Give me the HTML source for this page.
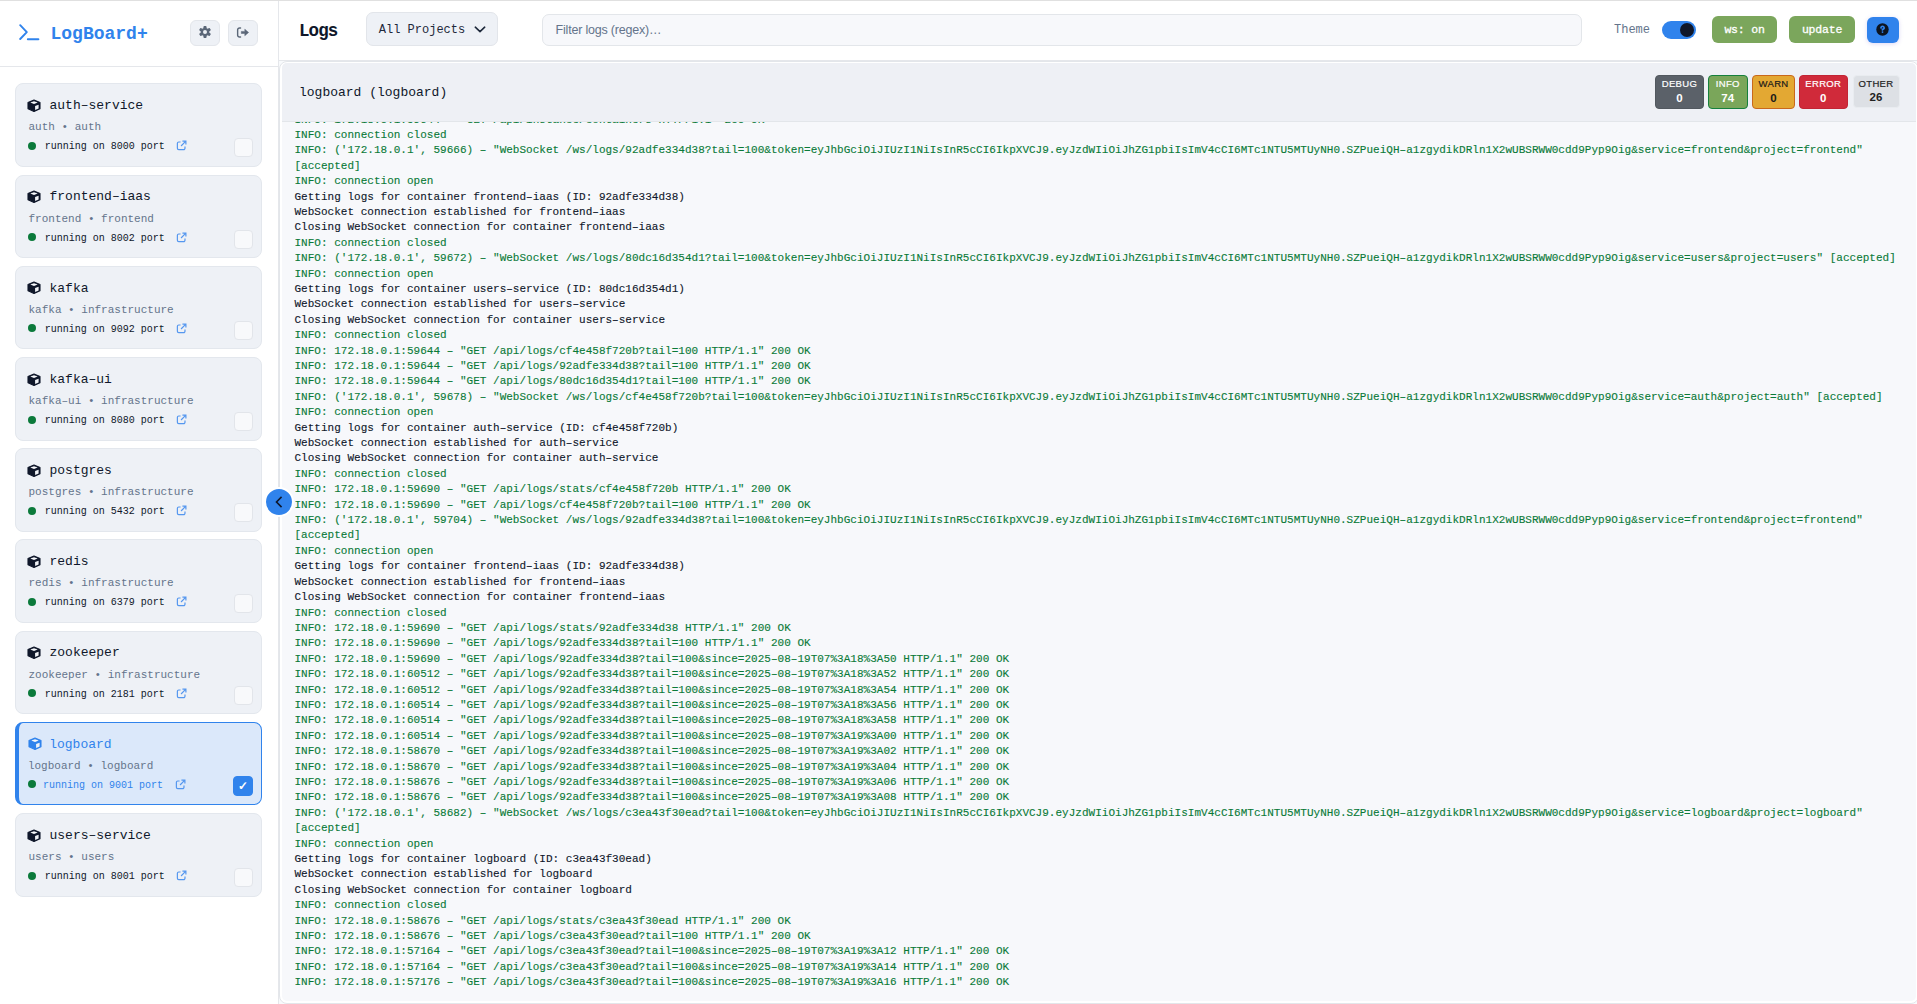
<!DOCTYPE html>
<html><head><meta charset="utf-8">
<style>
*{box-sizing:border-box;margin:0;padding:0}
html,body{width:1917px;height:1004px;overflow:hidden;background:#fff}
body{position:relative;font-family:"Liberation Mono",monospace;color:#0f172a}
.abs{position:absolute}
.topline{position:absolute;left:0;top:0;width:1917px;height:1px;background:#e0e0e0;z-index:50}
.sidebar{position:absolute;left:0;top:0;width:279px;height:1004px;border-right:1px solid #e5e7eb;background:#fff}
.sb-head{position:absolute;left:0;top:0;width:278px;height:67px;border-bottom:1px solid #e5e7eb}
.logo{position:absolute;left:19px;top:24px;width:21px;height:17px}
.brand{position:absolute;left:50.5px;top:25px;font-size:18px;line-height:18px;font-weight:bold;color:#3083ec;white-space:nowrap}
.ibtn{position:absolute;top:20px;width:29.5px;height:26px;border:1px solid #e3e6eb;background:#eef1f6;border-radius:6px}
.ibtn svg{position:absolute;left:50%;top:50%;transform:translate(-50%,-50%)}
.card{position:absolute;left:15px;width:246.5px;height:83.5px;background:#eef1f6;border:1px solid #e3e7ed;border-radius:8px}
.card.sel{background:#dbe8fa;border:1px solid #3083ec;border-left:4px solid #3083ec}
.card .cube{position:absolute;left:10.3px;top:14.7px;width:16px;height:16px;color:#0f172a}
.card.sel .cube{color:#3083ec;left:7.5px}
.card .name{position:absolute;left:33.5px;top:14.8px;font-size:13px;line-height:13px;white-space:nowrap}
.card.sel .name{color:#3083ec;left:30.2px}
.card .sub{position:absolute;left:12.5px;top:38px;font-size:11px;line-height:11px;color:#64748b;white-space:nowrap}
.card.sel .sub{left:8.9px}
.card .dot{position:absolute;left:12px;top:57.5px;width:8px;height:8px;border-radius:50%;background:#0b7a3b}
.card.sel .dot{left:9px}
.card .status{position:absolute;left:28.7px;top:58px;font-size:10px;line-height:10px;white-space:nowrap;color:#0f172a}
.card.sel .status{color:#3083ec;left:24px}
.card .ext{position:absolute;left:159.5px;top:56px;width:11px;height:11px;color:#5597ef}
.card.sel .ext{left:155.5px}
.card .cb{position:absolute;left:218px;top:54px;width:19px;height:19px;border:1px solid #e2e5ea;background:#f8f9fb;border-radius:4px;color:#fff;font-size:12px;line-height:18px;text-align:center;font-family:"Liberation Sans",sans-serif;font-weight:bold}
.card.sel .cb{left:214px;top:53px;width:20px;height:20px;background:#3083ec;border-color:#3083ec}

.mhead{position:absolute;left:279px;top:0;width:1638px;height:61px;border-bottom:1px solid #e5e7eb;background:#fff}
.title{position:absolute;left:299px;top:22.5px;font-size:17.5px;line-height:17.5px;letter-spacing:-0.9px;font-weight:bold;color:#0f172a}
.dd{position:absolute;left:366.3px;top:12.2px;width:131.4px;height:34.2px;border:1px solid #e2e5ea;background:#eef1f6;border-radius:7px}
.dd span{position:absolute;left:11.5px;top:11px;font-size:12px;line-height:12px;color:#1e293b;white-space:nowrap}
.dd svg{position:absolute;left:106.3px;top:12.4px}
.filter{position:absolute;left:542.4px;top:14.3px;width:1039.5px;height:31.4px;border:1px solid #e3e6ea;background:#f7f8fb;border-radius:7px}
.filter span{position:absolute;left:12.2px;top:8.8px;font-family:"Liberation Sans",sans-serif;font-size:12.5px;line-height:13px;letter-spacing:-0.2px;color:#64748b;white-space:nowrap}
.theme{position:absolute;left:1614px;top:24px;font-size:12px;line-height:12px;color:#64748b}
.toggle{position:absolute;left:1662px;top:20.5px;width:34px;height:18.6px;border-radius:10px;background:#3083ec}
.knob{position:absolute;left:1680px;top:22.9px;width:14.2px;height:14.2px;border-radius:50%;background:#0f172a}
.gbtn{position:absolute;top:16px;height:27px;border-radius:6px;background:#7ba65c;color:#fff;font-size:11.5px;line-height:28.2px;-webkit-text-stroke:0.3px #fff;letter-spacing:-0.2px;text-align:center;white-space:nowrap}
.qbtn{position:absolute;left:1867px;top:17.3px;width:32px;height:25.5px;border-radius:6px;background:#3083ec;box-shadow:0 1px 4px rgba(120,100,220,.25)}
.qbtn svg{position:absolute;left:8.8px;top:5.3px}

.mainbg{position:absolute;left:279px;top:61px;width:1638px;height:943px;background:#f8fafc}
.panel{position:absolute;left:279px;top:61px;width:1640px;height:943px;border:1px solid #e3e6ea;border-radius:8px;background:#fff}
.inner{position:absolute;left:2px;top:1px;right:2px;bottom:2px;border-radius:5px;background:#f7f8fb;overflow:hidden}
.ph{position:absolute;left:0;top:0;width:100%;height:59px;background:#eef0f5;border-bottom:1px solid #e3e6ea;z-index:5}
.ph .pt{position:absolute;left:17px;top:23px;font-size:13px;line-height:13px;color:#0f172a;white-space:nowrap}
.badge{position:absolute;top:11.8px;height:34px;border-radius:4px;border:1px solid;font-family:"Liberation Sans",sans-serif;text-align:center}
.badge .bl{position:absolute;left:0;right:0;top:3.6px;font-size:9.5px;line-height:10px;letter-spacing:0.35px;-webkit-text-stroke:0.2px currentColor}
.badge .bn{position:absolute;left:0;right:0;top:17px;font-size:11.5px;line-height:11.5px;font-weight:bold}
.logs{position:absolute;left:12.5px;top:49.5px;width:1612px;font-size:11px;line-height:15.4px;letter-spacing:0.016px}
.l{white-space:pre-wrap;overflow-wrap:normal}
.l.g{color:#0a7a38}
.l{-webkit-text-stroke:0.12px currentColor}
.l.d{color:#0f172a}
.collapse{position:absolute;left:264px;top:486.8px;width:30px;height:30px;border-radius:50%;background:#3083ec;border:2px solid #fff;z-index:60}
.collapse svg{position:absolute;left:6.5px;top:7px}
</style></head><body>
<div class="topline"></div>
<div class="sidebar">
  <div class="sb-head">
    <svg class="logo" viewBox="0 0 21 17"><path d="M1.2 1.2 7.8 8.1 1.2 15" fill="none" stroke="#3083ec" stroke-width="1.9" stroke-linecap="round" stroke-linejoin="round"/><path d="M8.8 15.3H19.4" stroke="#3083ec" stroke-width="1.9" stroke-linecap="round"/></svg>
    <div class="brand">LogBoard+</div>
    <div class="ibtn" style="left:190.2px"><svg style="margin-top:-0.6px" width="13" height="13" viewBox="0 0 13 13"><path fill="#5b6778" fill-rule="evenodd" d="M4.63 3.08 L5.27 0.42 L7.73 0.42 L8.37 3.08 L8.53 3.17 L11.15 2.40 L12.38 4.53 L10.40 6.41 L10.40 6.59 L12.38 8.47 L11.15 10.60 L8.53 9.83 L8.37 9.92 L7.73 12.58 L5.27 12.58 L4.63 9.92 L4.47 9.83 L1.85 10.60 L0.62 8.47 L2.60 6.59 L2.60 6.41 L0.62 4.53 L1.85 2.40 L4.47 3.17Z M6.5 4.5A2 2 0 1 0 6.5 8.5 2 2 0 1 0 6.5 4.5Z"/></svg></div>
    <div class="ibtn" style="left:228.2px"><svg width="13" height="12" viewBox="0 0 13 12"><path d="M4 0.9H3.1A2 2 0 0 0 1.1 2.9V8A2 2 0 0 0 3.1 10H4" fill="none" stroke="#5b6778" stroke-width="1.5" stroke-linecap="round"/><path d="M4.8 4.4H8.3V2.2L12.1 5.45 8.3 8.7V6.5H4.8Z" fill="#5b6778" stroke="#5b6778" stroke-width=".5" stroke-linejoin="round"/></svg></div>
  </div>
<div class="card" style="top:83.40px">
  <svg class="cube" viewBox="0 0 16 16"><path d="M8 1 14 3.4V9.8L8 12.5 2 9.8V3.4Z" fill="currentColor" stroke="currentColor" stroke-width="1.1" stroke-linejoin="round"/><path d="M4.3 3.6 8 2.2 11.7 3.6 8 5.1Z" fill="#f6f8fb"/><path d="M9.1 7.1 12.6 5.8V9.6L9.1 11.1Z" fill="#f1f3f7"/></svg><div class="name">auth–service</div>
  <div class="sub">auth • auth</div>
  <span class="dot"></span><div class="status">running on 8000 port</div><svg class="ext" viewBox="0 0 12 12"><path d="M5 2.2H3A1.5 1.5 0 0 0 1.5 3.7V9A1.5 1.5 0 0 0 3 10.5H8.3A1.5 1.5 0 0 0 9.8 9V7" fill="none" stroke="currentColor" stroke-width="1.3"/><path d="M5.5 6.5 10.2 1.8M7 1.2H10.8V5" fill="none" stroke="currentColor" stroke-width="1.3"/></svg>
  <div class="cb"></div>
</div>
<div class="card" style="top:174.60px">
  <svg class="cube" viewBox="0 0 16 16"><path d="M8 1 14 3.4V9.8L8 12.5 2 9.8V3.4Z" fill="currentColor" stroke="currentColor" stroke-width="1.1" stroke-linejoin="round"/><path d="M4.3 3.6 8 2.2 11.7 3.6 8 5.1Z" fill="#f6f8fb"/><path d="M9.1 7.1 12.6 5.8V9.6L9.1 11.1Z" fill="#f1f3f7"/></svg><div class="name">frontend–iaas</div>
  <div class="sub">frontend • frontend</div>
  <span class="dot"></span><div class="status">running on 8002 port</div><svg class="ext" viewBox="0 0 12 12"><path d="M5 2.2H3A1.5 1.5 0 0 0 1.5 3.7V9A1.5 1.5 0 0 0 3 10.5H8.3A1.5 1.5 0 0 0 9.8 9V7" fill="none" stroke="currentColor" stroke-width="1.3"/><path d="M5.5 6.5 10.2 1.8M7 1.2H10.8V5" fill="none" stroke="currentColor" stroke-width="1.3"/></svg>
  <div class="cb"></div>
</div>
<div class="card" style="top:265.80px">
  <svg class="cube" viewBox="0 0 16 16"><path d="M8 1 14 3.4V9.8L8 12.5 2 9.8V3.4Z" fill="currentColor" stroke="currentColor" stroke-width="1.1" stroke-linejoin="round"/><path d="M4.3 3.6 8 2.2 11.7 3.6 8 5.1Z" fill="#f6f8fb"/><path d="M9.1 7.1 12.6 5.8V9.6L9.1 11.1Z" fill="#f1f3f7"/></svg><div class="name">kafka</div>
  <div class="sub">kafka • infrastructure</div>
  <span class="dot"></span><div class="status">running on 9092 port</div><svg class="ext" viewBox="0 0 12 12"><path d="M5 2.2H3A1.5 1.5 0 0 0 1.5 3.7V9A1.5 1.5 0 0 0 3 10.5H8.3A1.5 1.5 0 0 0 9.8 9V7" fill="none" stroke="currentColor" stroke-width="1.3"/><path d="M5.5 6.5 10.2 1.8M7 1.2H10.8V5" fill="none" stroke="currentColor" stroke-width="1.3"/></svg>
  <div class="cb"></div>
</div>
<div class="card" style="top:357.00px">
  <svg class="cube" viewBox="0 0 16 16"><path d="M8 1 14 3.4V9.8L8 12.5 2 9.8V3.4Z" fill="currentColor" stroke="currentColor" stroke-width="1.1" stroke-linejoin="round"/><path d="M4.3 3.6 8 2.2 11.7 3.6 8 5.1Z" fill="#f6f8fb"/><path d="M9.1 7.1 12.6 5.8V9.6L9.1 11.1Z" fill="#f1f3f7"/></svg><div class="name">kafka–ui</div>
  <div class="sub">kafka–ui • infrastructure</div>
  <span class="dot"></span><div class="status">running on 8080 port</div><svg class="ext" viewBox="0 0 12 12"><path d="M5 2.2H3A1.5 1.5 0 0 0 1.5 3.7V9A1.5 1.5 0 0 0 3 10.5H8.3A1.5 1.5 0 0 0 9.8 9V7" fill="none" stroke="currentColor" stroke-width="1.3"/><path d="M5.5 6.5 10.2 1.8M7 1.2H10.8V5" fill="none" stroke="currentColor" stroke-width="1.3"/></svg>
  <div class="cb"></div>
</div>
<div class="card" style="top:448.20px">
  <svg class="cube" viewBox="0 0 16 16"><path d="M8 1 14 3.4V9.8L8 12.5 2 9.8V3.4Z" fill="currentColor" stroke="currentColor" stroke-width="1.1" stroke-linejoin="round"/><path d="M4.3 3.6 8 2.2 11.7 3.6 8 5.1Z" fill="#f6f8fb"/><path d="M9.1 7.1 12.6 5.8V9.6L9.1 11.1Z" fill="#f1f3f7"/></svg><div class="name">postgres</div>
  <div class="sub">postgres • infrastructure</div>
  <span class="dot"></span><div class="status">running on 5432 port</div><svg class="ext" viewBox="0 0 12 12"><path d="M5 2.2H3A1.5 1.5 0 0 0 1.5 3.7V9A1.5 1.5 0 0 0 3 10.5H8.3A1.5 1.5 0 0 0 9.8 9V7" fill="none" stroke="currentColor" stroke-width="1.3"/><path d="M5.5 6.5 10.2 1.8M7 1.2H10.8V5" fill="none" stroke="currentColor" stroke-width="1.3"/></svg>
  <div class="cb"></div>
</div>
<div class="card" style="top:539.40px">
  <svg class="cube" viewBox="0 0 16 16"><path d="M8 1 14 3.4V9.8L8 12.5 2 9.8V3.4Z" fill="currentColor" stroke="currentColor" stroke-width="1.1" stroke-linejoin="round"/><path d="M4.3 3.6 8 2.2 11.7 3.6 8 5.1Z" fill="#f6f8fb"/><path d="M9.1 7.1 12.6 5.8V9.6L9.1 11.1Z" fill="#f1f3f7"/></svg><div class="name">redis</div>
  <div class="sub">redis • infrastructure</div>
  <span class="dot"></span><div class="status">running on 6379 port</div><svg class="ext" viewBox="0 0 12 12"><path d="M5 2.2H3A1.5 1.5 0 0 0 1.5 3.7V9A1.5 1.5 0 0 0 3 10.5H8.3A1.5 1.5 0 0 0 9.8 9V7" fill="none" stroke="currentColor" stroke-width="1.3"/><path d="M5.5 6.5 10.2 1.8M7 1.2H10.8V5" fill="none" stroke="currentColor" stroke-width="1.3"/></svg>
  <div class="cb"></div>
</div>
<div class="card" style="top:630.60px">
  <svg class="cube" viewBox="0 0 16 16"><path d="M8 1 14 3.4V9.8L8 12.5 2 9.8V3.4Z" fill="currentColor" stroke="currentColor" stroke-width="1.1" stroke-linejoin="round"/><path d="M4.3 3.6 8 2.2 11.7 3.6 8 5.1Z" fill="#f6f8fb"/><path d="M9.1 7.1 12.6 5.8V9.6L9.1 11.1Z" fill="#f1f3f7"/></svg><div class="name">zookeeper</div>
  <div class="sub">zookeeper • infrastructure</div>
  <span class="dot"></span><div class="status">running on 2181 port</div><svg class="ext" viewBox="0 0 12 12"><path d="M5 2.2H3A1.5 1.5 0 0 0 1.5 3.7V9A1.5 1.5 0 0 0 3 10.5H8.3A1.5 1.5 0 0 0 9.8 9V7" fill="none" stroke="currentColor" stroke-width="1.3"/><path d="M5.5 6.5 10.2 1.8M7 1.2H10.8V5" fill="none" stroke="currentColor" stroke-width="1.3"/></svg>
  <div class="cb"></div>
</div>
<div class="card sel" style="top:721.80px">
  <svg class="cube" viewBox="0 0 16 16"><path d="M8 1 14 3.4V9.8L8 12.5 2 9.8V3.4Z" fill="currentColor" stroke="currentColor" stroke-width="1.1" stroke-linejoin="round"/><path d="M4.3 3.6 8 2.2 11.7 3.6 8 5.1Z" fill="#f6f8fb"/><path d="M9.1 7.1 12.6 5.8V9.6L9.1 11.1Z" fill="#f1f3f7"/></svg><div class="name">logboard</div>
  <div class="sub">logboard • logboard</div>
  <span class="dot"></span><div class="status">running on 9001 port</div><svg class="ext" viewBox="0 0 12 12"><path d="M5 2.2H3A1.5 1.5 0 0 0 1.5 3.7V9A1.5 1.5 0 0 0 3 10.5H8.3A1.5 1.5 0 0 0 9.8 9V7" fill="none" stroke="currentColor" stroke-width="1.3"/><path d="M5.5 6.5 10.2 1.8M7 1.2H10.8V5" fill="none" stroke="currentColor" stroke-width="1.3"/></svg>
  <div class="cb">✓</div>
</div>
<div class="card" style="top:813.00px">
  <svg class="cube" viewBox="0 0 16 16"><path d="M8 1 14 3.4V9.8L8 12.5 2 9.8V3.4Z" fill="currentColor" stroke="currentColor" stroke-width="1.1" stroke-linejoin="round"/><path d="M4.3 3.6 8 2.2 11.7 3.6 8 5.1Z" fill="#f6f8fb"/><path d="M9.1 7.1 12.6 5.8V9.6L9.1 11.1Z" fill="#f1f3f7"/></svg><div class="name">users–service</div>
  <div class="sub">users • users</div>
  <span class="dot"></span><div class="status">running on 8001 port</div><svg class="ext" viewBox="0 0 12 12"><path d="M5 2.2H3A1.5 1.5 0 0 0 1.5 3.7V9A1.5 1.5 0 0 0 3 10.5H8.3A1.5 1.5 0 0 0 9.8 9V7" fill="none" stroke="currentColor" stroke-width="1.3"/><path d="M5.5 6.5 10.2 1.8M7 1.2H10.8V5" fill="none" stroke="currentColor" stroke-width="1.3"/></svg>
  <div class="cb"></div>
</div>
</div>
<div class="mhead">
</div>
<div class="title">Logs</div>
<div class="dd"><span>All Projects</span><svg width="12" height="8" viewBox="0 0 12 8"><path d="M1.3 1.2 6 5.6 10.7 1.2" fill="none" stroke="#1e293b" stroke-width="1.6" stroke-linecap="round" stroke-linejoin="round"/></svg></div>
<div class="filter"><span>Filter logs (regex)…</span></div>
<div class="theme">Theme</div>
<div class="toggle"></div><div class="knob"></div>
<div class="gbtn" style="left:1712px;width:65px">ws: on</div>
<div class="gbtn" style="left:1789px;width:66px">update</div>
<div class="qbtn"><svg width="13" height="13" viewBox="0 0 13 13"><circle cx="6.5" cy="6.5" r="6.2" fill="#0d1420"/><path d="M5 4.9A1.55 1.55 0 1 1 6.5 6.4V7" fill="none" stroke="#3083ec" stroke-width="1.7" stroke-linecap="round"/><circle cx="6.5" cy="9.1" r=".9" fill="#3083ec"/></svg></div>

<div class="mainbg"></div>
<div class="panel"><div class="inner">
  <div class="ph">
    <div class="pt">logboard (logboard)</div>
    <div class="badge" style="left:1373px;width:49px;background:#5b6169;border-color:#52585f;color:#fff"><div class="bl">DEBUG</div><div class="bn">0</div></div>
    <div class="badge" style="left:1426px;width:39.5px;background:#7aa65a;border-color:#15803d;color:#fff"><div class="bl">INFO</div><div class="bn">74</div></div>
    <div class="badge" style="left:1470.3px;width:42.5px;background:#e3a833;border-color:#c9681c;color:#1a1a1a"><div class="bl">WARN</div><div class="bn">0</div></div>
    <div class="badge" style="left:1517px;width:48.6px;background:#d02a3a;border-color:#c22434;color:#fff"><div class="bl">ERROR</div><div class="bn">0</div></div>
    <div class="badge" style="left:1570.5px;width:47px;top:12px;height:33px;background:#dde0e5;border-color:#e9ecf0;color:#222"><div class="bl" style="top:3px">OTHER</div><div class="bn" style="top:16.2px">26</div></div>
  </div>
  <div class="logs">
<div class="l g">INFO: 172.18.0.1:59644 – &quot;GET /api/instance/containers HTTP/1.1&quot; 200 OK</div><div class="l g">INFO: connection closed</div><div class="l g">INFO: (&#x27;172.18.0.1&#x27;, 59666) – &quot;WebSocket /ws/logs/92adfe334d38?tail=100&amp;token=eyJhbGciOiJIUzI1NiIsInR5cCI6IkpXVCJ9.eyJzdWIiOiJhZG1pbiIsImV4cCI6MTc1NTU5MTUyNH0.SZPueiQH–a1zgydikDRln1X2wUBSRWW0cdd9Pyp9Oig&amp;service=frontend&amp;project=frontend&quot; [accepted]</div><div class="l g">INFO: connection open</div><div class="l d">Getting logs for container frontend–iaas (ID: 92adfe334d38)</div><div class="l d">WebSocket connection established for frontend–iaas</div><div class="l d">Closing WebSocket connection for container frontend–iaas</div><div class="l g">INFO: connection closed</div><div class="l g">INFO: (&#x27;172.18.0.1&#x27;, 59672) – &quot;WebSocket /ws/logs/80dc16d354d1?tail=100&amp;token=eyJhbGciOiJIUzI1NiIsInR5cCI6IkpXVCJ9.eyJzdWIiOiJhZG1pbiIsImV4cCI6MTc1NTU5MTUyNH0.SZPueiQH–a1zgydikDRln1X2wUBSRWW0cdd9Pyp9Oig&amp;service=users&amp;project=users&quot; [accepted]</div><div class="l g">INFO: connection open</div><div class="l d">Getting logs for container users–service (ID: 80dc16d354d1)</div><div class="l d">WebSocket connection established for users–service</div><div class="l d">Closing WebSocket connection for container users–service</div><div class="l g">INFO: connection closed</div><div class="l g">INFO: 172.18.0.1:59644 – &quot;GET /api/logs/cf4e458f720b?tail=100 HTTP/1.1&quot; 200 OK</div><div class="l g">INFO: 172.18.0.1:59644 – &quot;GET /api/logs/92adfe334d38?tail=100 HTTP/1.1&quot; 200 OK</div><div class="l g">INFO: 172.18.0.1:59644 – &quot;GET /api/logs/80dc16d354d1?tail=100 HTTP/1.1&quot; 200 OK</div><div class="l g">INFO: (&#x27;172.18.0.1&#x27;, 59678) – &quot;WebSocket /ws/logs/cf4e458f720b?tail=100&amp;token=eyJhbGciOiJIUzI1NiIsInR5cCI6IkpXVCJ9.eyJzdWIiOiJhZG1pbiIsImV4cCI6MTc1NTU5MTUyNH0.SZPueiQH–a1zgydikDRln1X2wUBSRWW0cdd9Pyp9Oig&amp;service=auth&amp;project=auth&quot; [accepted]</div><div class="l g">INFO: connection open</div><div class="l d">Getting logs for container auth–service (ID: cf4e458f720b)</div><div class="l d">WebSocket connection established for auth–service</div><div class="l d">Closing WebSocket connection for container auth–service</div><div class="l g">INFO: connection closed</div><div class="l g">INFO: 172.18.0.1:59690 – &quot;GET /api/logs/stats/cf4e458f720b HTTP/1.1&quot; 200 OK</div><div class="l g">INFO: 172.18.0.1:59690 – &quot;GET /api/logs/cf4e458f720b?tail=100 HTTP/1.1&quot; 200 OK</div><div class="l g">INFO: (&#x27;172.18.0.1&#x27;, 59704) – &quot;WebSocket /ws/logs/92adfe334d38?tail=100&amp;token=eyJhbGciOiJIUzI1NiIsInR5cCI6IkpXVCJ9.eyJzdWIiOiJhZG1pbiIsImV4cCI6MTc1NTU5MTUyNH0.SZPueiQH–a1zgydikDRln1X2wUBSRWW0cdd9Pyp9Oig&amp;service=frontend&amp;project=frontend&quot; [accepted]</div><div class="l g">INFO: connection open</div><div class="l d">Getting logs for container frontend–iaas (ID: 92adfe334d38)</div><div class="l d">WebSocket connection established for frontend–iaas</div><div class="l d">Closing WebSocket connection for container frontend–iaas</div><div class="l g">INFO: connection closed</div><div class="l g">INFO: 172.18.0.1:59690 – &quot;GET /api/logs/stats/92adfe334d38 HTTP/1.1&quot; 200 OK</div><div class="l g">INFO: 172.18.0.1:59690 – &quot;GET /api/logs/92adfe334d38?tail=100 HTTP/1.1&quot; 200 OK</div><div class="l g">INFO: 172.18.0.1:59690 – &quot;GET /api/logs/92adfe334d38?tail=100&amp;since=2025–08–19T07%3A18%3A50 HTTP/1.1&quot; 200 OK</div><div class="l g">INFO: 172.18.0.1:60512 – &quot;GET /api/logs/92adfe334d38?tail=100&amp;since=2025–08–19T07%3A18%3A52 HTTP/1.1&quot; 200 OK</div><div class="l g">INFO: 172.18.0.1:60512 – &quot;GET /api/logs/92adfe334d38?tail=100&amp;since=2025–08–19T07%3A18%3A54 HTTP/1.1&quot; 200 OK</div><div class="l g">INFO: 172.18.0.1:60514 – &quot;GET /api/logs/92adfe334d38?tail=100&amp;since=2025–08–19T07%3A18%3A56 HTTP/1.1&quot; 200 OK</div><div class="l g">INFO: 172.18.0.1:60514 – &quot;GET /api/logs/92adfe334d38?tail=100&amp;since=2025–08–19T07%3A18%3A58 HTTP/1.1&quot; 200 OK</div><div class="l g">INFO: 172.18.0.1:60514 – &quot;GET /api/logs/92adfe334d38?tail=100&amp;since=2025–08–19T07%3A19%3A00 HTTP/1.1&quot; 200 OK</div><div class="l g">INFO: 172.18.0.1:58670 – &quot;GET /api/logs/92adfe334d38?tail=100&amp;since=2025–08–19T07%3A19%3A02 HTTP/1.1&quot; 200 OK</div><div class="l g">INFO: 172.18.0.1:58670 – &quot;GET /api/logs/92adfe334d38?tail=100&amp;since=2025–08–19T07%3A19%3A04 HTTP/1.1&quot; 200 OK</div><div class="l g">INFO: 172.18.0.1:58676 – &quot;GET /api/logs/92adfe334d38?tail=100&amp;since=2025–08–19T07%3A19%3A06 HTTP/1.1&quot; 200 OK</div><div class="l g">INFO: 172.18.0.1:58676 – &quot;GET /api/logs/92adfe334d38?tail=100&amp;since=2025–08–19T07%3A19%3A08 HTTP/1.1&quot; 200 OK</div><div class="l g">INFO: (&#x27;172.18.0.1&#x27;, 58682) – &quot;WebSocket /ws/logs/c3ea43f30ead?tail=100&amp;token=eyJhbGciOiJIUzI1NiIsInR5cCI6IkpXVCJ9.eyJzdWIiOiJhZG1pbiIsImV4cCI6MTc1NTU5MTUyNH0.SZPueiQH–a1zgydikDRln1X2wUBSRWW0cdd9Pyp9Oig&amp;service=logboard&amp;project=logboard&quot; [accepted]</div><div class="l g">INFO: connection open</div><div class="l d">Getting logs for container logboard (ID: c3ea43f30ead)</div><div class="l d">WebSocket connection established for logboard</div><div class="l d">Closing WebSocket connection for container logboard</div><div class="l g">INFO: connection closed</div><div class="l g">INFO: 172.18.0.1:58676 – &quot;GET /api/logs/stats/c3ea43f30ead HTTP/1.1&quot; 200 OK</div><div class="l g">INFO: 172.18.0.1:58676 – &quot;GET /api/logs/c3ea43f30ead?tail=100 HTTP/1.1&quot; 200 OK</div><div class="l g">INFO: 172.18.0.1:57164 – &quot;GET /api/logs/c3ea43f30ead?tail=100&amp;since=2025–08–19T07%3A19%3A12 HTTP/1.1&quot; 200 OK</div><div class="l g">INFO: 172.18.0.1:57164 – &quot;GET /api/logs/c3ea43f30ead?tail=100&amp;since=2025–08–19T07%3A19%3A14 HTTP/1.1&quot; 200 OK</div><div class="l g">INFO: 172.18.0.1:57176 – &quot;GET /api/logs/c3ea43f30ead?tail=100&amp;since=2025–08–19T07%3A19%3A16 HTTP/1.1&quot; 200 OK</div>
  </div>
</div></div>
<div class="collapse"><svg width="12" height="12" viewBox="0 0 12 12"><path d="M8 1.5 3.5 6 8 10.5" fill="none" stroke="#0f172a" stroke-width="1.6" stroke-linecap="square"/></svg></div>
</body></html>
